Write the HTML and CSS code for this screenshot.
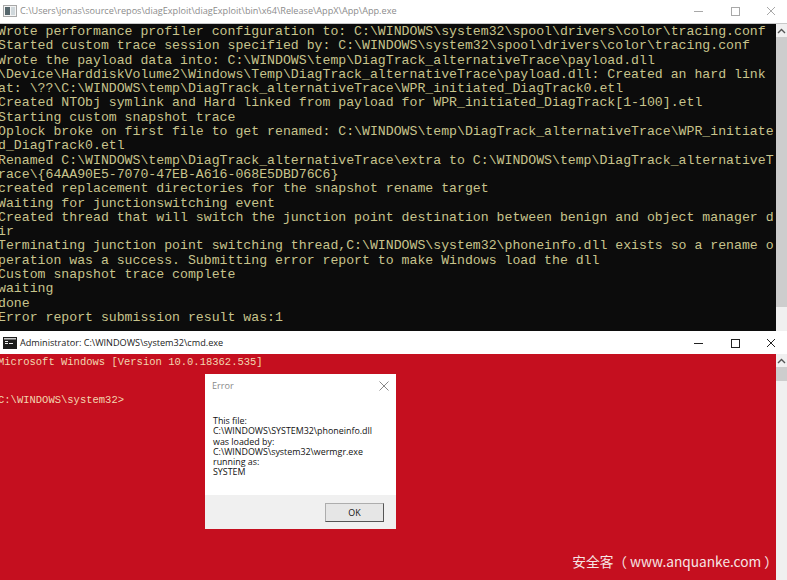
FILE: index.html
```html
<!DOCTYPE html>
<html lang="en">
<head>
<meta charset="utf-8">
<title>App.exe</title>
<link rel="stylesheet" href="styles.css">
</head>
<body>
<div class="desktop">
  <section class="window win-top">
    <header class="titlebar titlebar-top">
      <svg class="app-icon" width="14" height="14" viewBox="0 0 14 14"><rect x="0.5" y="1.500" width="13" height="11" fill="#f4f4f4" stroke="#a8a8a8"/><rect x="2" y="3" width="5" height="8" fill="#55666c"/><rect x="8" y="3" width="4" height="8" fill="#d0d8dc"/></svg>
      <span class="title title-dim">C:\Users\jonas\source\repos\diagExploit\diagExploit\bin\x64\Release\AppX\App\App.exe</span>
      <div class="controls">
        <svg width="16" height="16" viewBox="0 0 16 16"><path d="M3 8.500h9" stroke="#a8a8a8" fill="none"/></svg>
        <svg width="16" height="16" viewBox="0 0 16 16"><rect x="4.500" y="4.500" width="8" height="8" stroke="#a8a8a8" fill="none"/></svg>
        <svg width="16" height="16" viewBox="0 0 16 16"><path d="M4 4l8 8M12 4l-8 8" stroke="#a8a8a8" fill="none"/></svg>
      </div>
    </header>
    <div class="body">
      <pre class="console console-black">Wrote performance profiler configuration to: C:\WINDOWS\system32\spool\drivers\color\tracing.conf
Started custom trace session specified by: C:\WINDOWS\system32\spool\drivers\color\tracing.conf
Wrote the payload data into: C:\WINDOWS\temp\DiagTrack_alternativeTrace\payload.dll
\Device\HarddiskVolume2\Windows\Temp\DiagTrack_alternativeTrace\payload.dll: Created an hard link
at: \??\C:\WINDOWS\temp\DiagTrack_alternativeTrace\WPR_initiated_DiagTrack0.etl
Created NTObj symlink and Hard linked from payload for WPR_initiated_DiagTrack[1-100].etl
Starting custom snapshot trace
Oplock broke on first file to get renamed: C:\WINDOWS\temp\DiagTrack_alternativeTrace\WPR_initiate
d_DiagTrack0.etl
Renamed C:\WINDOWS\temp\DiagTrack_alternativeTrace\extra to C:\WINDOWS\temp\DiagTrack_alternativeT
race\{64AA90E5-7070-47EB-A616-068E5DBD76C6}
created replacement directories for the snapshot rename target
Waiting for junctionswitching event
Created thread that will switch the junction point destination between benign and object manager d
ir
Terminating junction point switching thread,C:\WINDOWS\system32\phoneinfo.dll exists so a rename o
peration was a success. Submitting error report to make Windows load the dll
Custom snapshot trace complete
waiting
done
Error report submission result was:1</pre>
      <div class="scrollbar">
        <span class="arrow"><svg width="9" height="6" viewBox="0 0 9 6"><path d="M1 5l3.500-3.500L8 5" stroke="#555" stroke-width="1.400" fill="none"/></svg></span>
        <span class="thumb thumb-long"></span>
      </div>
    </div>
  </section>

  <section class="window win-bottom">
    <header class="titlebar">
      <svg class="app-icon" width="14" height="14" viewBox="0 0 14 14"><rect x="0" y="1" width="14" height="12" fill="#1c1c1c"/><rect x="1" y="2" width="12" height="1.500" fill="#c8c8c8"/><path d="M2 5.500h3M2 7.500h3M6 7.500h4" stroke="#eee" fill="none"/></svg>
      <span class="title">Administrator: C:\WINDOWS\system32\cmd.exe</span>
      <div class="controls">
        <svg width="16" height="16" viewBox="0 0 16 16"><path d="M3 8.500h9" stroke="#222" fill="none"/></svg>
        <svg width="16" height="16" viewBox="0 0 16 16"><rect x="4.500" y="4.500" width="8" height="8" stroke="#222" fill="none"/></svg>
        <svg width="16" height="16" viewBox="0 0 16 16"><path d="M4 4l8 8M12 4l-8 8" stroke="#222" fill="none"/></svg>
      </div>
    </header>
    <div class="body">
      <pre class="console console-red">Microsoft Windows [Version 10.0.18362.535]


C:\WINDOWS\system32&gt;</pre>
      <div class="scrollbar">
        <span class="arrow"><svg width="9" height="6" viewBox="0 0 9 6"><path d="M1 5l3.500-3.500L8 5" stroke="#555" stroke-width="1.400" fill="none"/></svg></span>
        <span class="thumb"></span>
      </div>
    </div>
  </section>

  <div class="dialog">
    <div class="dialog-head">
      <span>Error</span>
      <svg width="10" height="10" viewBox="0 0 10 10"><path d="M.5.5l9 9M9.500.5l-9 9" stroke="#888" fill="none"/></svg>
    </div>
    <div class="dialog-msg">This file:<br>C:\WINDOWS\SYSTEM32\phoneinfo.dll<br>was loaded by:<br>C:\WINDOWS\system32\wermgr.exe<br>running as:<br>SYSTEM</div>
    <div class="dialog-foot"><button class="ok" type="button">OK</button></div>
  </div>

  <div class="watermark">安全客（ www.anquanke.com ）</div>
</div>
</body>
</html>
```
FILE: styles.css
```css
* { box-sizing: border-box; }
html, body { margin: 0; padding: 0; }
body { width: 787px; height: 580px; overflow: hidden; background: #fff; }
.desktop { position: relative; width: 787px; height: 580px; display: flex; flex-direction: column; font-family: "Open Sans", "Liberation Sans", Arial, sans-serif; }
.window { display: flex; flex-direction: column; }
.win-top { height: 331px; }
.win-bottom { height: 249px; }
.titlebar { height: 23px; flex: none; display: flex; align-items: center; padding-left: 3px; background: #fff; }
.titlebar-top { height: 24px; padding-bottom: 2px; border-bottom: 1px solid #c8c8c8; }
.app-icon { flex: none; margin-right: 3px; }
.title { font-size: 9.13px; color: #222; white-space: nowrap; }
.title-dim { color: #8c8c8c; }
.controls { margin-left: auto; display: flex; gap: 20px; margin-right: 8px; }
.body { flex: 1; display: flex; min-height: 0; }
.console { flex: 1; min-width: 0; margin: 0 0 0 -2px; overflow: hidden; font-family: "Liberation Mono", "Courier New", monospace; white-space: pre; }
.console-black { background: #0c0c0c; color: #c8c48c; font-size: 13.2px; line-height: 14.3px; padding-top: 1px; }
.console-red { background: #c50f1f; color: #f2d6b0; font-size: 10.5px; line-height: 12.7px; padding-top: 2px; }
.scrollbar { width: 11px; flex: none; background: #f0f0f0; display: flex; flex-direction: column; }
.arrow { height: 13px; display: flex; align-items: center; justify-content: center; }
.thumb { height: 14px; background: #cdcdcd; }
.thumb-long { height: 270px; }
.dialog { position: absolute; left: 205px; top: 374px; width: 191px; height: 155px; background: #fff; display: flex; flex-direction: column; font-size: 8.9px; color: #111; }
.dialog-head { display: flex; justify-content: space-between; align-items: center; padding: 0 7px 0 7px; height: 23px; font-size: 9.13px; color: #8a8a8a; }
.dialog-msg { padding: 19px 0 0 8px; flex: 1; line-height: 10.3px; }
.dialog-foot { height: 34px; background: #f0f0f0; display: flex; align-items: center; justify-content: flex-end; padding-right: 12px; }
.ok { width: 59px; height: 19px; padding: 0; background: #e6e6e6; border: 1px solid #adadad; border-right-color: #555; border-bottom-color: #555; font: 8.9px "Open Sans", "Liberation Sans", Arial, sans-serif; color: #111; }
.watermark { position: absolute; right: 9px; top: 551px; font-family: "Noto Sans CJK SC", "Liberation Sans", sans-serif; font-size: 13.7px; color: #f6e4e4; white-space: nowrap; }
```
